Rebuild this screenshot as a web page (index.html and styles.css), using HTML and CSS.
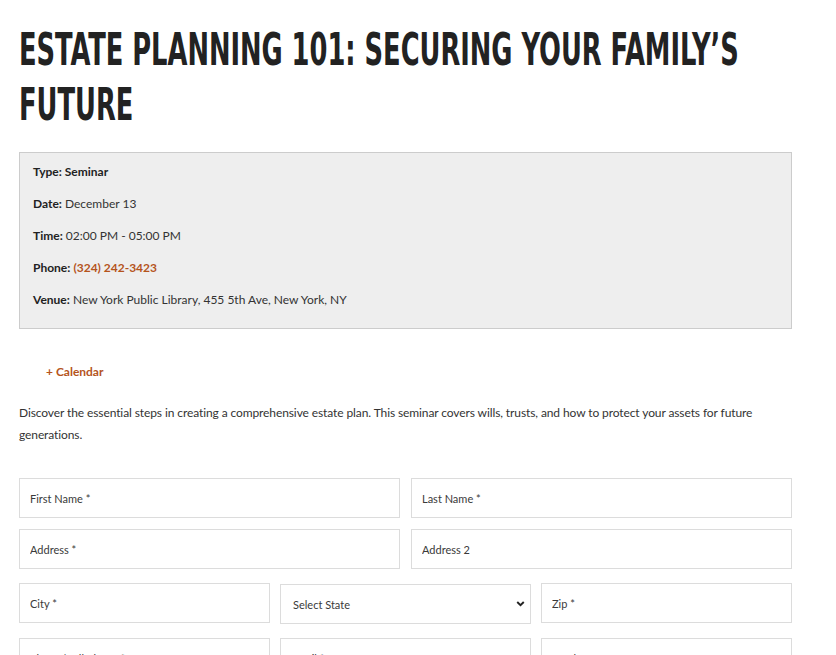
FILE: index.html
```html
<!DOCTYPE html>
<html lang="en">
<head>
<meta charset="utf-8">
<title>Estate Planning 101</title>
<link rel="stylesheet" href="styles.css">
</head>
<body>
<main class="page">
  <div class="title-wrap">
    <h1 class="title">Estate Planning 101: Securing Your Family’s Future</h1>
  </div>
  <section class="info">
    <p><strong>Type: Seminar</strong></p>
    <p><strong>Date:</strong> December 13</p>
    <p><strong>Time:</strong> 02:00 PM - 05:00 PM</p>
    <p><strong>Phone:</strong> <a class="phone" href="#">(324) 242-3423</a></p>
    <p><strong>Venue:</strong> New York Public Library, 455 5th Ave, New York, NY</p>
  </section>
  <div class="cal"><a href="#" class="cal-link">+ Calendar</a></div>
  <p class="desc">Discover the essential steps in creating a comprehensive estate plan. This seminar covers wills, trusts, and how to protect your assets for future generations.</p>
  <form class="form">
    <div class="row two">
      <input class="field" type="text" placeholder="First Name *">
      <input class="field" type="text" placeholder="Last Name *">
    </div>
    <div class="row two">
      <input class="field" type="text" placeholder="Address *">
      <input class="field" type="text" placeholder="Address 2">
    </div>
    <div class="row three">
      <input class="field" type="text" placeholder="City *">
      <div class="select-wrap">
        <select class="field select">
          <option>Select State</option>
        </select>
        <svg class="chev" viewBox="0 0 10 7" width="9" height="6"><path d="M1.2 1.2 L5 5 L8.8 1.2" fill="none" stroke="#222" stroke-width="2.2"/></svg>
      </div>
      <input class="field" type="text" placeholder="Zip *">
    </div>
    <div class="row three">
      <input class="field" type="text" placeholder="Phone/Cell Phone *">
      <input class="field" type="text" placeholder="Email *">
      <input class="field" type="text" placeholder="Employer">
    </div>
  </form>
</main>
</body>
</html>
```
FILE: styles.css
```css
* { box-sizing: border-box; }
html { overflow-x: hidden; }
html, body { margin: 0; padding: 0; background: #fff; }
body {
  font-family: Lato, "Noto Sans", sans-serif;
  color: #333;
}
.page {
  width: 773px;
  margin-left: 19px;
  padding-top: 22px;
}
.title-wrap { height: 112px; margin-bottom: 18px; }
.title {
  font-family: "DejaVu Sans Condensed", "DejaVu Sans", sans-serif;
  font-weight: 700;
  text-transform: uppercase;
  font-size: 44px;
  line-height: 55px;
  letter-spacing: 0;
  color: #222;
  margin: 0;
  width: 1180px;
  transform: scaleX(0.65);
  transform-origin: 0 0;
}
.info {
  background: #eeeeee;
  border: 1px solid #cccccc;
  padding: 3px 13px 12px 13px;
}
.info p {
  margin: 0;
  font-size: 12px;
  line-height: 32px;
  color: #333;
}
.info strong { color: #222; font-weight: 700; }
.phone { color: #b5541c; text-decoration: none; font-weight: 700; }
.cal { padding: 30px 0 0 27px; line-height: 22px; }
.cal-link {
  color: #b5541c;
  font-weight: 700;
  font-size: 12px;
  text-decoration: none;
}
.desc {
  font-size: 12px;
  line-height: 22px;
  letter-spacing: -0.1px;
  margin: 19px 0 32px 0;
  color: #333;
}
.form { display: flex; flex-direction: column; gap: 11px; }
.row { display: grid; }
.row.two { grid-template-columns: 1fr 1fr; column-gap: 11px; }
.row.three { grid-template-columns: 1fr 1fr 1fr; column-gap: 10px; margin-top: 3px; }
.field {
  height: 40px;
  border: 1px solid #dcdcdc;
  background: #fff;
  font-family: Lato, "Noto Sans", sans-serif;
  font-size: 11px;
  padding: 0 10px;
  color: #333;
  width: 100%;
  border-radius: 0;
  outline: none;
}
.field::placeholder { color: #3a3a3a; }
.select-wrap { position: relative; margin-top: 1px; }
.select {
  appearance: none;
  -webkit-appearance: none;
  padding-left: 12px;
  color: #3a3a3a;
}
.chev { position: absolute; right: 6px; top: 17px; pointer-events: none; }
```
